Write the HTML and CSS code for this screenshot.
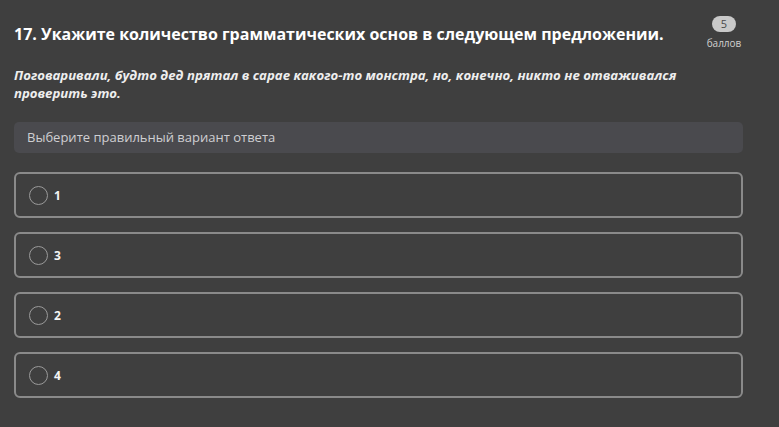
FILE: index.html
```html
<!DOCTYPE html>
<html lang="ru">
<head>
    <meta charset="UTF-8">
    <meta name="viewport" content="width=device-width, initial-scale=1.0">
    <title>Вопрос 17</title>
    <link rel="stylesheet" href="styles.css">
</head>
<body>
    <div class="question">
        <div class="question-head">
            <h2 class="question-title">17. Укажите количество грамматических основ в следующем предложении.</h2>
            <div class="score">
                <span class="score-num">5</span>
                <span class="score-label">баллов</span>
            </div>
        </div>

        <p class="question-text">Поговаривали, будто дед прятал в сарае какого-то монстра, но, конечно, никто не отваживался проверить это.</p>

        <div class="hint">Выберите правильный вариант ответа</div>

        <div class="options">
            <label class="option">
                <span class="radio"></span>
                <span class="option-text">1</span>
            </label>
            <label class="option">
                <span class="radio"></span>
                <span class="option-text">3</span>
            </label>
            <label class="option">
                <span class="radio"></span>
                <span class="option-text">2</span>
            </label>
            <label class="option">
                <span class="radio"></span>
                <span class="option-text">4</span>
            </label>
        </div>
    </div>
</body>
</html>
```

FILE: styles.css
```css
body {
    margin: 0;
    background-color: #3f3f3f;
    font-family: 'Open Sans', 'Noto Sans', sans-serif;
    color: #fff;
}

.question {
    width: 729px;
    padding: 16px 0 0 14px;
}

.question-head {
    display: flex;
    justify-content: space-between;
    align-items: flex-start;
}

.question-title {
    margin: 6px 0 0 0;
    font-size: 16px;
    font-weight: 700;
    line-height: 24px;
    white-space: nowrap;
}

.score {
    display: flex;
    flex-direction: column;
    align-items: center;
    flex-shrink: 0;
    width: 40px;
    margin-right: -1px;
}

.score-num {
    width: 24px;
    height: 16px;
    border-radius: 8px;
    background-color: #c9c9c9;
    color: #4a4a4a;
    font-size: 11px;
    line-height: 16px;
    text-align: center;
}

.score-label {
    margin-top: 4px;
    font-size: 10px;
    line-height: 14px;
    color: #d0d0d0;
}

.question-text {
    max-width: 700px;
    margin: 16px 0 0 0;
    font-size: 13.2px;
    font-weight: 700;
    font-style: italic;
    line-height: 18px;
    color: #eeeeee;
}

.hint {
    margin-top: 20px;
    height: 31px;
    padding-left: 13px;
    border-radius: 5px;
    background-color: #4a4a4e;
    color: #cfcfd2;
    font-size: 13px;
    line-height: 31px;
}

.options {
    display: flex;
    flex-direction: column;
    gap: 14px;
    margin-top: 19px;
}

.option {
    display: flex;
    align-items: center;
    height: 42px;
    padding-left: 13px;
    border: 2px solid #8a8a8a;
    border-radius: 6px;
    cursor: pointer;
}

.radio {
    width: 17px;
    height: 17px;
    border: 1.5px solid #9a9a9a;
    border-radius: 50%;
}

.option-text {
    margin-left: 6px;
    font-size: 12px;
    font-weight: 700;
    color: #f4f4f4;
}
```
